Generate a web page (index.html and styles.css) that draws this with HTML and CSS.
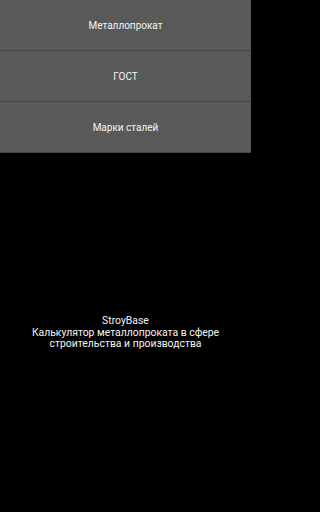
FILE: index.html
```html
<!DOCTYPE html>
<html lang="ru">
<head>
<meta charset="utf-8">
<meta name="viewport" content="width=device-width, initial-scale=1">
<link rel="stylesheet" href="styles.css">
</head>
<body>
<div class="app">
  <nav class="menu">
    <div class="item">Металлопрокат</div>
    <div class="item">ГОСТ</div>
    <div class="item">Марки сталей</div>
  </nav>
  <main class="about">
    <p>StroyBase<br>Калькулятор металлопроката в сфере<br>строительства и производства</p>
  </main>
</div>
</body>
</html>
```
FILE: styles.css
```css
html, body {
  margin: 0;
  padding: 0;
  background: #000;
}
.app {
  display: flex;
  flex-direction: column;
  width: 100%;
  max-width: 251px;
  height: 512px;
  font-family: Roboto, "Noto Sans", sans-serif;
  color: #f4f4f4;
}
.menu {
  display: flex;
  flex-direction: column;
  background: #595959;
}
.item {
  height: 50px;
  border-bottom: 1px solid #454545;
  display: flex;
  align-items: center;
  justify-content: center;
  font-size: 10px;
}
.about {
  flex: 1;
  display: flex;
  align-items: center;
  justify-content: center;
}
.about p {
  margin: 0;
  text-align: center;
  font-size: 10.4px;
  line-height: 11.7px;
}
```
